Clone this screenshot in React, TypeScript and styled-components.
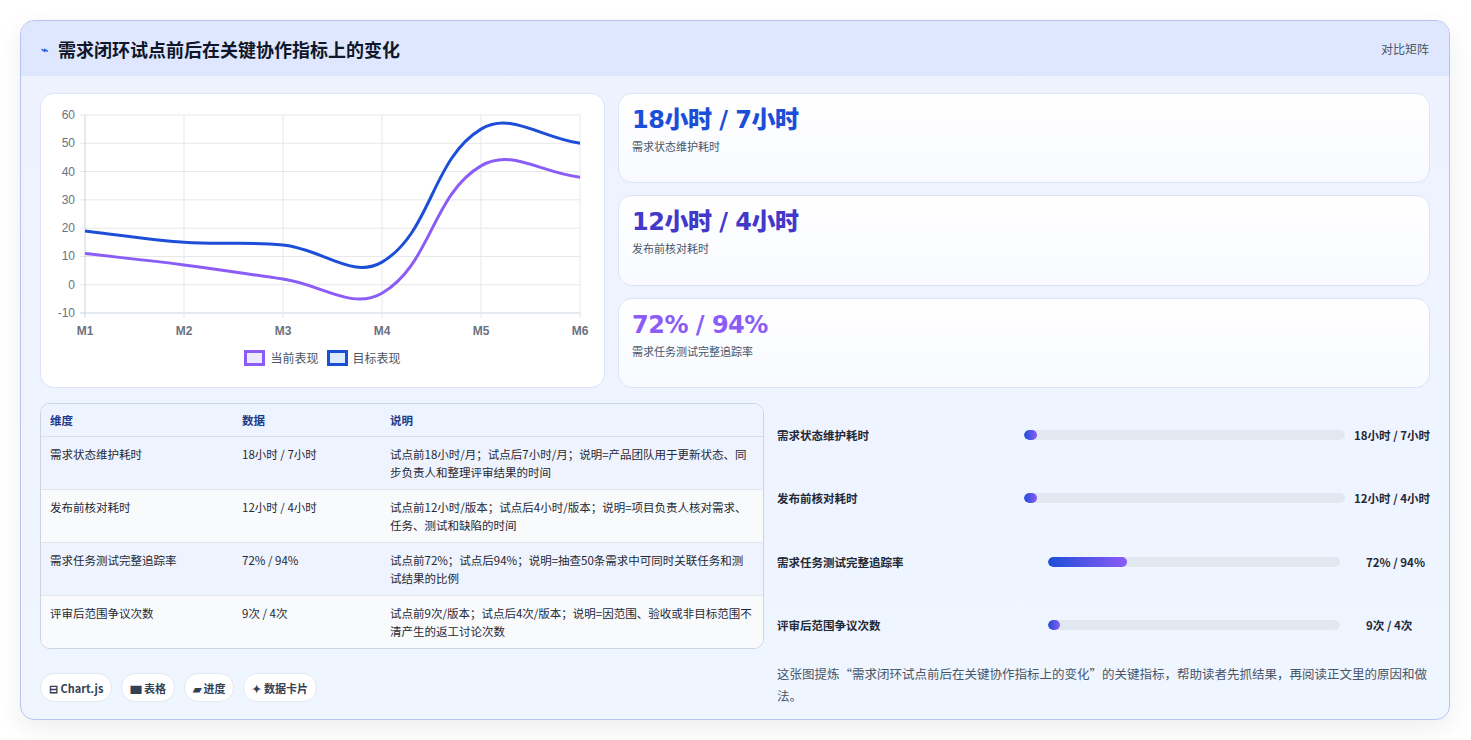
import { FC } from 'react'
import styled, { createGlobalStyle } from 'styled-components'

const Global = createGlobalStyle`
    body {
        margin: 0;
        background: #ffffff;
        font-family: "Noto Sans CJK SC", "Noto Sans", sans-serif;
        color: #1f2937;
    }
`;

const Page = styled.div`
    padding: 20px 21px 20px 20px;
`;

const Card = styled.section`
    border: 1px solid #b8c4f0;
    border-radius: 14px;
    background: linear-gradient(180deg, #eef2ff 0%, #eff6ff 100%);
    box-shadow: 0 8px 24px rgba(30, 41, 59, 0.08);
    overflow: hidden;
    height: 698px;
    display: flex;
    flex-direction: column;
`;

const Header = styled.header`
    display: flex;
    flex-shrink: 0;
    align-items: center;
    justify-content: space-between;
    height: 55px;
    padding: 0 20px;
    background: #dfe7fe;
`;

const Title = styled.h1`
    margin: 0;
    font-size: 18px;
    font-weight: 700;
    color: #0f172a;
    display: flex;
    align-items: center;
    gap: 10px;
`;

const TitleIcon = styled.span`
    color: #2563eb;
    font-size: 12px;
`;

const HeaderTag = styled.span`
    font-size: 12px;
    color: #475569;
`;

const Body = styled.div`
    flex: 1;
    padding: 17px 19px 18px 19px;
    display: flex;
    flex-direction: column;
    gap: 15px;
`;

const TopRow = styled.div`
    display: grid;
    grid-template-columns: 565px 1fr;
    gap: 13px;
    height: 295px;
    flex-shrink: 0;
`;

const Panel = styled.div`
    background: #ffffff;
    border: 1px solid #dbe3f5;
    border-radius: 14px;
`;

const ChartPanel = styled(Panel)`
    position: relative;
`;

const Stats = styled.div`
    display: flex;
    flex-direction: column;
    gap: 12px;
`;

const StatCard = styled(Panel)`
    flex: 1;
    padding: 10px 13px;
    background: linear-gradient(180deg, #ffffff 0%, #f8faff 100%);
`;

const StatValue = styled.div<{ $color: string }>`
    font-family: "DejaVu Sans", "Noto Sans CJK SC", sans-serif;
    font-size: 24px;
    font-weight: 800;
    letter-spacing: -0.5px;
    color: ${p => p.$color};
    line-height: 32px;
`;

const StatLabel = styled.div`
    font-size: 11px;
    color: #475569;
    margin-top: 2px;
`;

const BottomRow = styled.div`
    display: grid;
    grid-template-columns: 724px 1fr;
    gap: 13px;
    flex: 1;
`;

const LeftCol = styled.div`
    display: flex;
    flex-direction: column;
    gap: 24px;
`;

const Table = styled.table`
    width: 100%;
    table-layout: fixed;
    border-collapse: separate;
    border-spacing: 0;
    border: 1px solid #cbd5e1;
    border-radius: 10px;
    overflow: hidden;
    font-size: 11.5px;
    background: #fff;
`;

const Th = styled.th<{ $w?: number }>`
    text-align: left;
    font-weight: 700;
    color: #1e3a8a;
    background: #eef4ff;
    padding: 8px 9px;
    width: ${p => (p.$w ? `${p.$w}px` : 'auto')};
    border-bottom: 1px solid #d7def0;
`;

const Tr = styled.tr<{ $alt: boolean }>`
    background: ${p => (p.$alt ? '#f8fafc' : '#eef3fd')};
`;

const Td = styled.td<{ $last: boolean }>`
    padding: 8px 9px;
    vertical-align: top;
    line-height: 18px;
    color: #1f2937;
    border-bottom: ${p => (p.$last ? 'none' : '1px solid #e2e8f0')};
    height: 36px;
`;

const Chips = styled.div`
    display: flex;
    gap: 9px;
`;

const Chip = styled.span`
    display: inline-flex;
    align-items: center;
    height: 27px;
    padding: 0 8px;
    border-radius: 14px;
    background: #fff;
    border: 1px solid #e2e8f0;
    font-size: 11px;
    font-weight: 700;
    color: #334155;
`;

const RightCol = styled.div`
    display: flex;
    flex-direction: column;
`;

const Bars = styled.div`
    display: flex;
    flex-direction: column;
`;

const BarRow = styled.div<{ $shift: number; $gap: number }>`
    display: grid;
    grid-template-columns: ${p => 238 + p.$shift}px 1fr auto;
    column-gap: ${p => p.$gap}px;
    align-items: center;
    height: 63.5px;
    font-size: 11.5px;
    font-weight: 700;
    color: #1f2937;
    & > :first-child { margin-right: -${p => p.$gap}px; }
`;

const Track = styled.div`
    height: 10px;
    border-radius: 5px;
    background: #e2e8f0;
    overflow: hidden;
`;

const Fill = styled.div`
    height: 100%;
    border-radius: 5px;
    background: linear-gradient(90deg, #1d4ed8, #8b5cf6);
`;

const BarValue = styled.span<{ $min: number }>`
    text-align: left;
    min-width: ${p => p.$min}px;
    white-space: nowrap;
`;

const Caption = styled.p`
    margin: 6px 0 0;
    font-size: 12.5px;
    line-height: 22px;
    color: #475569;
`;

const Legend = styled.div`
    position: absolute;
    left: 0;
    right: 0;
    top: 255px;
    display: flex;
    justify-content: center;
    gap: 8px;
    font-size: 12px;
    color: #4b5563;
`;

const LegendItem = styled.span`
    display: flex;
    align-items: center;
    gap: 5px;
`;

const Swatch = styled.span<{ $c: string; $bg: string }>`
    width: 15px;
    height: 10px;
    border: 3px solid ${p => p.$c};
    background: ${p => p.$bg};
`;

// chart geometry (panel-local coords)
const X0 = 44, X1 = 539, Y0 = 21, Y1 = 219;
const xs = [0, 1, 2, 3, 4, 5].map(i => X0 + (i * (X1 - X0)) / 5);
const yOf = (v: number) => Y1 - ((v + 10) / 70) * (Y1 - Y0);

function spline(vals: number[]): string {
    const pts = vals.map((v, i) => [xs[i], yOf(v)]);
    const t = 0.4;
    const cps = pts.map((p, i) => {
        const prev = pts[i - 1] || p, next = pts[i + 1] || p;
        const d01 = Math.hypot(p[0] - prev[0], p[1] - prev[1]);
        const d12 = Math.hypot(next[0] - p[0], next[1] - p[1]);
        const s = d01 + d12 || 1;
        const fa = (t * d01) / s, fb = (t * d12) / s;
        return {
            a: [p[0] - fa * (next[0] - prev[0]), p[1] - fa * (next[1] - prev[1])],
            b: [p[0] + fb * (next[0] - prev[0]), p[1] + fb * (next[1] - prev[1])],
        };
    });
    let d = `M${pts[0][0]},${pts[0][1]}`;
    for (let i = 1; i < pts.length; i++) {
        d += ` C${cps[i - 1].b[0]},${cps[i - 1].b[1]} ${cps[i].a[0]},${cps[i].a[1]} ${pts[i][0]},${pts[i][1]}`;
    }
    return d;
}

const LineChart: FC = () => (
    <svg width="565" height="250" style={{ display: 'block' }}>
        {[60, 50, 40, 30, 20, 10, 0, -10].map(v => (
            <g key={v}>
                <line x1={X0 - 5} x2={X1} y1={yOf(v)} y2={yOf(v)} stroke={v === -10 ? '#cbd5e1' : '#e5e7eb'} />
                <text x={X0 - 10} y={yOf(v) + 4} textAnchor="end" fontSize="12" fill="#6b7280" fontFamily="Liberation Sans, sans-serif">{v}</text>
            </g>
        ))}
        {xs.map((x, i) => (
            <g key={i}>
                <line x1={x} x2={x} y1={Y0} y2={Y1 + 5} stroke={i === 0 ? '#cbd5e1' : '#e5e7eb'} />
                <text x={x} y={Y1 + 22} textAnchor="middle" fontSize="12" fontWeight="700" fill="#6b7280" fontFamily="Liberation Sans, sans-serif">M{i + 1}</text>
            </g>
        ))}
        <path d={spline([11, 7, 2, -3, 42, 38])} fill="none" stroke="#8b5cf6" strokeWidth="3" />
        <path d={spline([19, 15, 14, 8, 55, 50])} fill="none" stroke="#1d4ed8" strokeWidth="3" />
    </svg>
);

const stats = [
    { v: '18小时 / 7小时', l: '需求状态维护耗时', c: '#1d4ed8' },
    { v: '12小时 / 4小时', l: '发布前核对耗时', c: '#4338ca' },
    { v: '72% / 94%', l: '需求任务测试完整追踪率', c: '#8b5cf6' },
];

const rows = [
    ['需求状态维护耗时', '18小时 / 7小时', '试点前18小时/月；试点后7小时/月；说明=产品团队用于更新状态、同步负责人和整理评审结果的时间'],
    ['发布前核对耗时', '12小时 / 4小时', '试点前12小时/版本；试点后4小时/版本；说明=项目负责人核对需求、任务、测试和缺陷的时间'],
    ['需求任务测试完整追踪率', '72% / 94%', '试点前72%；试点后94%；说明=抽查50条需求中可同时关联任务和测试结果的比例'],
    ['评审后范围争议次数', '9次 / 4次', '试点前9次/版本；试点后4次/版本；说明=因范围、验收或非目标范围不清产生的返工讨论次数'],
];

const bars = [
    { l: '需求状态维护耗时', v: '18小时 / 7小时', pct: 4, shift: 0, gap: 9, min: 0 },
    { l: '发布前核对耗时', v: '12小时 / 4小时', pct: 4, shift: 0, gap: 9, min: 0 },
    { l: '需求任务测试完整追踪率', v: '72% / 94%', pct: 27, shift: 7, gap: 26, min: 64 },
    { l: '评审后范围争议次数', v: '9次 / 4次', pct: 4, shift: 7, gap: 26, min: 64 },
];

const App: FC = () => (
    <Page>
        <Global />
        <Card>
            <Header>
                <Title><TitleIcon>⌁</TitleIcon>需求闭环试点前后在关键协作指标上的变化</Title>
                <HeaderTag>对比矩阵</HeaderTag>
            </Header>
            <Body>
                <TopRow>
                    <ChartPanel>
                        <LineChart />
                        <Legend>
                            <LegendItem><Swatch $c="#8b5cf6" $bg="#ede9fe" />当前表现</LegendItem>
                            <LegendItem><Swatch $c="#1d4ed8" $bg="#dbeafe" />目标表现</LegendItem>
                        </Legend>
                    </ChartPanel>
                    <Stats>
                        {stats.map(s => (
                            <StatCard key={s.l}>
                                <StatValue $color={s.c}>{s.v}</StatValue>
                                <StatLabel>{s.l}</StatLabel>
                            </StatCard>
                        ))}
                    </Stats>
                </TopRow>
                <BottomRow>
                    <LeftCol>
                        <Table>
                            <thead>
                                <tr><Th $w={174}>维度</Th><Th $w={130}>数据</Th><Th>说明</Th></tr>
                            </thead>
                            <tbody>
                                {rows.map((r, i) => (
                                    <Tr key={r[0]} $alt={i % 2 === 1}>
                                        {r.map((c, j) => <Td key={j} $last={i === rows.length - 1}>{c}</Td>)}
                                    </Tr>
                                ))}
                            </tbody>
                        </Table>
                        <Chips>
                            <Chip>⊟ Chart.js</Chip>
                            <Chip>▆ 表格</Chip>
                            <Chip>▰ 进度</Chip>
                            <Chip>✦ 数据卡片</Chip>
                        </Chips>
                    </LeftCol>
                    <RightCol>
                        <Bars>
                            {bars.map(b => (
                                <BarRow key={b.l} $shift={b.shift} $gap={b.gap}>
                                    <span>{b.l}</span>
                                    <Track><Fill style={{ width: `${b.pct}%` }} /></Track>
                                    <BarValue $min={b.min}>{b.v}</BarValue>
                                </BarRow>
                            ))}
                        </Bars>
                        <Caption>这张图提炼“需求闭环试点前后在关键协作指标上的变化”的关键指标，帮助读者先抓结果，再阅读正文里的原因和做法。</Caption>
                    </RightCol>
                </BottomRow>
            </Body>
        </Card>
    </Page>
);

export default App;
